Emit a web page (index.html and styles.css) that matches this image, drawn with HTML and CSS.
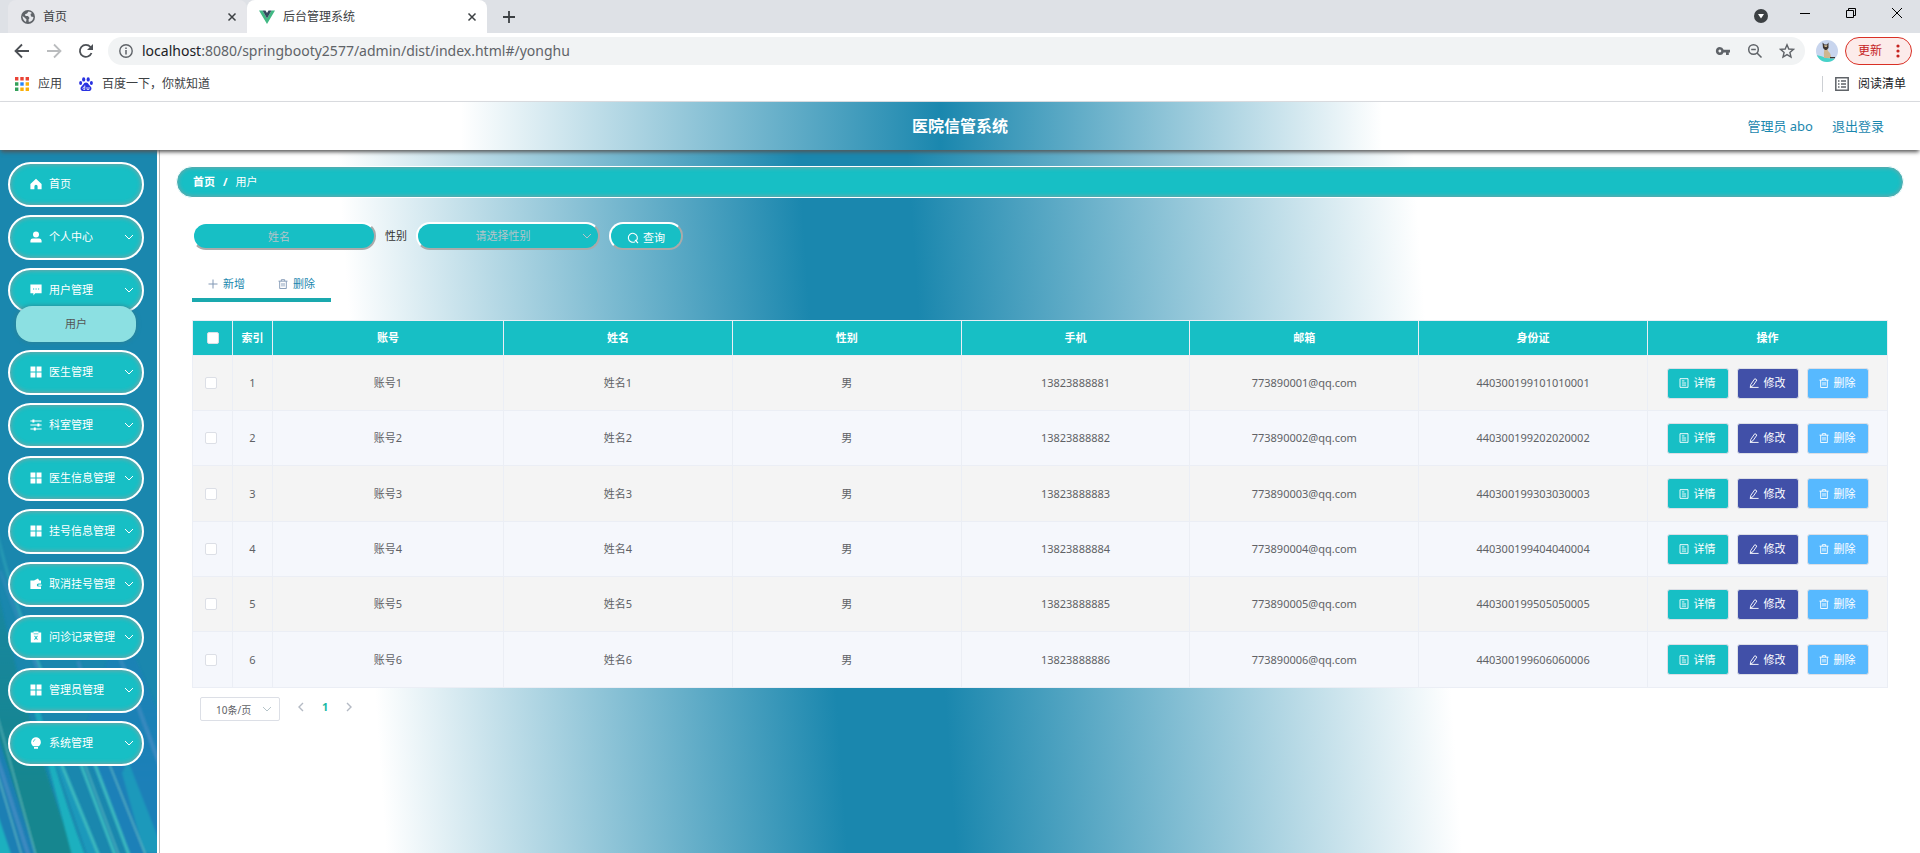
FILE: index.html
```html
<!DOCTYPE html>
<html lang="zh-CN">
<head>
<meta charset="utf-8">
<title>后台管理系统</title>
<link rel="stylesheet" href="styles.css">
</head>
<body>
<svg class="defs" aria-hidden="true">
  <symbol id="home" viewBox="0 0 12 12"><path fill="currentColor" d="M6 .8 11.6 6v5.2H7.6V8.4a1.6 1.6 0 0 0-3.2 0v2.8H.4V6z"/></symbol>
  <symbol id="user" viewBox="0 0 12 12"><circle cx="6" cy="3.4" r="3" fill="currentColor"/><path fill="currentColor" d="M.4 11.4V9.8Q.6 7.6 2.8 7.6h6.4q2.2 0 2.4 2.2v1.6z"/></symbol>
  <symbol id="chat" viewBox="0 0 12 12"><path fill="currentColor" fill-rule="evenodd" d="M.4.6h11.2v8.6H5.2L3.4 11.4V9.2h-3zM3 4.4v1.2h1.2V4.4zm2.5 0v1.2h1.2V4.4zm2.5 0v1.2h1.2V4.4z"/></symbol>
  <symbol id="grid" viewBox="0 0 12 12"><path fill="currentColor" d="M.5.5h4.900v4.900H.5zm6.100 0h4.900v4.900H6.600zM.5 6.600h4.900v4.900H.5zm6.100 0h4.900v4.900H6.600z"/></symbol>
  <symbol id="sliders" viewBox="0 0 12 12"><path stroke="currentColor" stroke-width="1" d="M.4 2h11.200M.4 6h11.200M.4 10h11.200"/><path fill="currentColor" d="M2.400.6h2v2.800h-2zM7.400 4.600h2v2.800h-2zM3.800 8.600h2v2.800h-2z"/></symbol>
  <symbol id="wallet" viewBox="0 0 12 12"><path fill="currentColor" fill-rule="evenodd" d="M4 2.600 8 .4l1.200 2.200h1.800v2.800H8.400a1.600 1.600 0 0 0 0 3.200H11V11H.4V2.600zM8.400 6.400h3.200v1.400H8.400z"/></symbol>
  <symbol id="clip" viewBox="0 0 12 12"><path fill="currentColor" fill-rule="evenodd" d="M.8 1.400h2.800V.4h4.800v1h2.800v10.200H.8zM3.600 2.400v.8h4.800v-.8zM4.200 5.200 5.400 6.700 4.200 8.300l.7.600L6 7.500l1.100 1.400.7-.6-1.200-1.600 1.200-1.500-.7-.6L6 6 4.900 4.600z"/></symbol>
  <symbol id="bulb" viewBox="0 0 12 12"><path fill="currentColor" d="M6 .2a4.900 4.900 0 0 1 2.600 9H3.400A4.900 4.900 0 0 1 6 .2zM4 10h4v1.800H4z"/><path d="M3.400 4.800Q3.600 2.800 5.400 2.400" fill="none" stroke="#17bfc5" stroke-width=".7"/></symbol>
  <symbol id="down" viewBox="0 0 10 10"><path d="m1 3 4 4 4-4" fill="none" stroke="currentColor" stroke-width="1"/></symbol>
  <symbol id="left" viewBox="0 0 10 10"><path d="M7 1 3 5l4 4" fill="none" stroke="currentColor" stroke-width="1.400"/></symbol>
  <symbol id="right" viewBox="0 0 10 10"><path d="m3 1 4 4-4 4" fill="none" stroke="currentColor" stroke-width="1.400"/></symbol>
  <symbol id="search" viewBox="0 0 12 12"><path d="M8 9.700A4.500 4.500 0 1 1 9.400 8.500M8 8l3 3" fill="none" stroke="currentColor" stroke-width="1.100"/></symbol>
  <symbol id="plus" viewBox="0 0 10 10"><path d="M5 .5v9M.5 5h9" stroke="currentColor" stroke-width="1"/></symbol>
  <symbol id="trash" viewBox="0 0 12 12"><path d="M.6 2.600h10.800M4 2.600V.8h4v1.800M2 2.600v8.800h8V2.600M4.800 4.800v4.200M7.200 4.800v4.200" fill="none" stroke="currentColor" stroke-width="1.100"/></symbol>
  <symbol id="doc" viewBox="0 0 12 12"><path d="M1.200.8h9.600v10.400H1.200zM3.500 3.500h3M3.500 6h5M3.500 8.500h5" fill="none" stroke="currentColor" stroke-width="1.100"/></symbol>
  <symbol id="pen" viewBox="0 0 12 12"><path d="M7 .8 9.500 2.400 4.800 9.200 1.600 10.800 2.200 7.600zM1 11.300h10.500" fill="none" stroke="currentColor" stroke-width="1.100"/></symbol>
  <symbol id="x" viewBox="0 0 10 10"><path d="m1.500 1.500 7 7m0-7-7 7" stroke="currentColor" stroke-width="1.500"/></symbol>
</svg>

<div class="browser">
  <div class="tabs">
    <div class="tab">
      <svg class="i14" viewBox="0 0 14 14"><circle cx="7" cy="7" r="7" fill="#5f6368"/><path fill="#e6e7eb" d="M7.500 1.500 6 3.500l-2 .8.5 1.700H7l1.500 2-1 1.500L7.800 12Q12 11.400 12.500 7L10 6.500 9.500 4 11 3Q9.500 1.500 7.500 1.500zM1.500 6Q1.600 10 5 12L5.500 9.500 3.500 7.500z"/></svg>
      <span class="tab-title">首页</span>
      <button class="plain" aria-label="关闭"><svg class="i10"><use href="#x"/></svg></button>
    </div>
    <div class="tab active">
      <svg class="i16" viewBox="0 0 16 16"><path fill="#41b883" d="M0 1.500h3.500L8 9.500l4.500-8H16L8 15z"/><path fill="#35495e" d="M3.500 1.500h3L8 4l1.500-2.500h3L8 9.500z"/></svg>
      <span class="tab-title">后台管理系统</span>
      <button class="plain" aria-label="关闭"><svg class="i10"><use href="#x"/></svg></button>
    </div>
    <button class="plain new-tab" aria-label="新标签页"><svg class="i12" viewBox="0 0 12 12"><path d="M6 0v12M0 6h12" stroke="#3c4043" stroke-width="1.800"/></svg></button>
    <div class="window-btns">
      <button class="plain search-tabs" aria-label="搜索标签页"><svg class="i14" viewBox="0 0 14 14"><circle cx="7" cy="7" r="7" fill="#3c4043"/><path d="M4 5h6L7 9.500z" fill="#fff"/></svg></button>
      <button class="plain" aria-label="最小化"><svg class="i12" viewBox="0 0 12 12"><path d="M1 6.500h10" stroke="#000"/></svg></button>
      <button class="plain" aria-label="还原"><svg class="i12" viewBox="0 0 12 12"><path d="M1.500 3.500h7v7h-7zM3.500 3.500v-2h7v7h-2" fill="none" stroke="#000"/></svg></button>
      <button class="plain" aria-label="关闭窗口"><svg class="i12" viewBox="0 0 12 12"><path d="m1 1 10 10M11 1 1 11" stroke="#000"/></svg></button>
    </div>
  </div>
  <div class="toolbar">
    <div class="nav-btns">
      <button class="plain" aria-label="后退"><svg class="i16" viewBox="0 0 16 16"><path d="M15 8H2M8 1.500 1.500 8 8 14.500" fill="none" stroke="#4c5055" stroke-width="1.800"/></svg></button>
      <button class="plain" aria-label="前进"><svg class="i16" viewBox="0 0 16 16"><path d="M1 8h13M8 1.500 14.500 8 8 14.500" fill="none" stroke="#babcbe" stroke-width="1.800"/></svg></button>
      <button class="plain" aria-label="刷新"><svg class="i16" viewBox="0 0 16 16"><path d="M13.500 10A6 6 0 1 1 12.500 4L14 6" fill="none" stroke="#4c5055" stroke-width="1.800"/><path d="M15 1v6H9z" fill="#4c5055"/></svg></button>
    </div>
    <div class="omnibox">
      <svg class="i14" viewBox="0 0 14 14"><circle cx="7" cy="7" r="6.200" fill="none" stroke="#5f6368" stroke-width="1.400"/><path d="M7 6v4.500M7 3.400v1.500" stroke="#5f6368" stroke-width="1.500"/></svg>
      <span class="url"><b>localhost</b>:8080/springbooty2577/admin/dist/index.html#/yonghu</span>
      <div class="omni-icons">
        <svg class="i16" viewBox="0 0 16 16"><path fill="#5f6368" fill-rule="evenodd" d="M4.800 4a4 4 0 0 1 3.800 2.700H15v2.800h-1.200V12H11V9.500H8.600A4 4 0 1 1 4.800 4zm0 2.600a1.400 1.400 0 1 0 .1 0z"/></svg>
        <svg class="i16" viewBox="0 0 16 16"><circle cx="6.500" cy="6.500" r="4.800" fill="none" stroke="#5f6368" stroke-width="1.500"/><path d="M10 10l4.500 4.500M4.200 6.500h4.600" stroke="#5f6368" stroke-width="1.500"/></svg>
        <svg class="i16" viewBox="0 0 16 16"><path d="m8 1.800 1.800 4.200 4.700.4-3.600 3 1.100 4.600L8 11.600 4 14l1.100-4.600-3.600-3 4.700-.4z" fill="none" stroke="#5f6368" stroke-width="1.400"/></svg>
      </div>
    </div>
    <svg class="avatar" viewBox="0 0 22 22"><defs><clipPath id="round"><circle cx="11" cy="11" r="11"/></clipPath></defs><g clip-path="url(#round)"><path fill="#c8d5ee" d="M0 0h22v22H0z"/><path fill="#45d3c8" d="M0 15q6 1 10 3l12 1v3H0z"/><path fill="#cdb68f" d="M8.500 8h3l.5 3q3 2 3 7H8q-.5-5 .5-10z"/><path fill="#3d3530" d="m6.500 2.500 2 2h2.500l1.500-2V8l-2 2H9L7 8zM14 17h5v1.200h-5z"/><path fill="#cdb68f" d="M8 5.200h3.500L10.700 7H8.800z"/></g></svg>
    <button class="update">更新<svg class="dots" viewBox="0 0 4 14"><g fill="#c5221f"><circle cx="2" cy="2" r="1.600"/><circle cx="2" cy="7" r="1.600"/><circle cx="2" cy="12" r="1.600"/></g></svg></button>
  </div>
  <div class="bookmarks">
    <a class="bookmark" href="#apps"><svg class="i14" viewBox="0 0 14 14"><path fill="#ea4335" d="M0 0h3.400v3.400H0zM5.300 0h3.400v3.400H5.300zM10.600 0H14v3.400h-3.400z"/><path fill="#34a05a" d="M0 5.300h3.400v3.400H0zM0 10.600h3.400V14H0z"/><path fill="#2684fc" d="M5.300 5.300h3.400v3.400H5.300z"/><path fill="#fbaf08" d="M10.600 5.300H14v3.400h-3.400zM5.300 10.600h3.400V14H5.300zM10.600 10.600H14V14h-3.400z"/></svg>应用</a>
    <a class="bookmark" href="#baidu"><svg class="i14" viewBox="0 0 14 14"><g fill="#2932e1"><ellipse cx="4.700" cy="2.400" rx="1.600" ry="2.200"/><ellipse cx="9.200" cy="2.400" rx="1.600" ry="2.200"/><ellipse cx="1.600" cy="6" rx="1.500" ry="2"/><ellipse cx="12.400" cy="6" rx="1.500" ry="2"/><path d="M7 5.600q1.800 0 3 2.200l2.200 2.400q1 2.800-1.700 3.700H3.500Q.8 13 1.800 10.200L4 7.800Q5.200 5.600 7 5.600z"/></g><path d="M5.800 8.500v4H4.600q-1.400-1.200 0-2.400h1.200M8 10v2.400h2V10" fill="none" stroke="#fff" stroke-width=".8"/></svg>百度一下，你就知道</a>
    <a class="bookmark reading" href="#reading"><svg class="i14" viewBox="0 0 14 14"><path d="M.8.8h12.400v12.400H.8zM3 4h1.500M3 7h1.500M3 10h1.500M6 4h5M6 7h5M6 10h5" fill="none" stroke="#5f6368" stroke-width="1.500"/></svg>阅读清单</a>
  </div>
</div>

<header class="header">
  <h1>医院信管系统</h1>
  <div class="account"><a href="#me">管理员 abo</a><a href="#logout">退出登录</a></div>
</header>

<div class="app">
  <nav class="sidebar">
    <svg class="streaks" viewBox="0 0 157 702" preserveAspectRatio="none" aria-hidden="true">
      <defs>
        <linearGradient id="fade" x1="0" y1="0" x2="0" y2="1"><stop offset=".42" stop-color="#fff" stop-opacity="0"/><stop offset=".7" stop-color="#fff" stop-opacity=".6"/><stop offset=".9" stop-color="#fff"/></linearGradient>
        <mask id="m"><path fill="url(#fade)" d="M0 0h157v702H0z"/></mask>
        <filter id="soft"><feGaussianBlur stdDeviation="1.200"/></filter>
      </defs>
      <g mask="url(#m)"><g filter="url(#soft)">
        <path fill="#12868f" d="M-10 400Q20 560 78 712H38L-10 570z"/>
        <path fill="#1a7fb4" d="M-10 560 38 712H10L-10 650z"/>
        <path fill="#1b80b8" d="M82 590Q110 660 134 712h40V600L120 470z"/>
        <path fill="#1fb0bf" d="M40 560Q60 640 88 712H74L34 560zM-10 640 14 712H-10z"/>
        <path fill="#1d99bb" d="M52 590 100 712H90L48 590zM128 610l36 92h-20l-22-80z"/>
        <path fill="none" stroke="#3cbcc0" stroke-width="3" d="m52 590 50 122M72 590l46 122M86 590l46 122M-10 350Q10 450 50 540"/>
        <path fill="none" stroke="#6cc7c6" stroke-width="1" d="M-4 560 38 712M80 600l42 112M96 580l52 130M-4 618 24 712"/>
        <path fill="none" stroke="#4c8fc6" stroke-width="4" opacity=".7" d="m78 510 12 40M110 480l52 140M-5 600l36 112M0 420l50 130"/>
      </g></g>
    </svg>
    <a class="item" href="#home"><svg class="i12"><use href="#home"/></svg><span>首页</span></a>
    <button class="item"><svg class="i12"><use href="#user"/></svg><span>个人中心</span><svg class="i10"><use href="#down"/></svg></button>
    <button class="item"><svg class="i12"><use href="#chat"/></svg><span>用户管理</span><svg class="i10"><use href="#down"/></svg></button>
    <a class="sub" href="#yonghu">用户</a>
    <button class="item"><svg class="i12"><use href="#grid"/></svg><span>医生管理</span><svg class="i10"><use href="#down"/></svg></button>
    <button class="item"><svg class="i12"><use href="#sliders"/></svg><span>科室管理</span><svg class="i10"><use href="#down"/></svg></button>
    <button class="item"><svg class="i12"><use href="#grid"/></svg><span>医生信息管理</span><svg class="i10"><use href="#down"/></svg></button>
    <button class="item"><svg class="i12"><use href="#grid"/></svg><span>挂号信息管理</span><svg class="i10"><use href="#down"/></svg></button>
    <button class="item"><svg class="i12"><use href="#wallet"/></svg><span>取消挂号管理</span><svg class="i10"><use href="#down"/></svg></button>
    <button class="item"><svg class="i12"><use href="#clip"/></svg><span>问诊记录管理</span><svg class="i10"><use href="#down"/></svg></button>
    <button class="item"><svg class="i12"><use href="#grid"/></svg><span>管理员管理</span><svg class="i10"><use href="#down"/></svg></button>
    <button class="item"><svg class="i12"><use href="#bulb"/></svg><span>系统管理</span><svg class="i10"><use href="#down"/></svg></button>
  </nav>

  <main class="main">
    <div class="crumbs"><a href="#home">首页</a><b>/</b><span>用户</span></div>
    <div class="content">
      <form class="filters">
        <input class="field" type="text" placeholder="姓名" aria-label="姓名">
        <label for="sex">性别</label>
        <div class="select-wrap"><select class="field" id="sex"><option>请选择性别</option><option>男</option><option>女</option></select><svg class="i10"><use href="#down"/></svg></div>
        <button class="query" type="button"><svg class="i12"><use href="#search"/></svg>查询</button>
      </form>
      <div class="actions">
        <button class="plain"><svg class="i10"><use href="#plus"/></svg>新增</button>
        <button class="plain"><svg class="i10"><use href="#trash"/></svg>删除</button>
      </div>
      <table class="table">
        <colgroup><col class="narrow"><col class="narrow"><col class="account-col"><col><col><col><col><col><col class="ops-col"></colgroup>
        <thead><tr><th><input type="checkbox" aria-label="全选"></th><th>索引</th><th>账号</th><th>姓名</th><th>性别</th><th>手机</th><th>邮箱</th><th>身份证</th><th>操作</th></tr></thead>
        <tbody id="rows"></tbody>
      </table>
      <div class="pager">
        <div class="select-wrap"><select aria-label="每页条数"><option>10条/页</option><option>20条/页</option></select><svg class="i10"><use href="#down"/></svg></div>
        <button class="plain" aria-label="上一页"><svg class="i10"><use href="#left"/></svg></button>
        <button class="plain current">1</button>
        <button class="plain" aria-label="下一页"><svg class="i10"><use href="#right"/></svg></button>
      </div>
    </div>
  </main>
</div>
<script src="app.js"></script>
</body>
</html>
```
FILE: app.js
```js
const ids = ["440300199101010001", "440300199202020002", "440300199303030003", "440300199404040004", "440300199505050005", "440300199606060006"];
const op = (kind, icon, text) => `<button class="op ${kind}"><svg class="i10"><use href="#${icon}"/></svg>${text}</button>`;
document.getElementById("rows").innerHTML = ids.map((id, i) => {
  const n = i + 1;
  return `<tr><td><input type="checkbox" aria-label="选择第${n}行"></td><td>${n}</td><td>账号${n}</td><td>姓名${n}</td><td>男</td><td>1382388888${n}</td><td>77389000${n}@qq.com</td><td>${id}</td><td><div class="ops">${op("detail", "doc", "详情")}${op("edit", "pen", "修改")}${op("remove", "trash", "删除")}</div></td></tr>`;
}).join("");
```
FILE: styles.css
```css
* { box-sizing: border-box; }
body {
  margin: 0;
  min-height: 100vh;
  display: flex;
  flex-direction: column;
  font: 11px/16px "Noto Sans", "Noto Sans CJK SC", sans-serif;
  color: #606266;
  background: #fff;
}
a { color: inherit; text-decoration: none; }
button, input, select { font: inherit; color: inherit; margin: 0; }
button { cursor: pointer; }
svg { display: block; flex: none; }
.defs { position: absolute; width: 0; height: 0; }
.i10 { width: 10px; height: 10px; }
.i12 { width: 12px; height: 12px; }
.i14 { width: 14px; height: 14px; }
.i16 { width: 16px; height: 16px; }
.plain { display: flex; align-items: center; border: 0; padding: 0; background: none; }

/* browser window */
.browser { font-size: 12px; color: #3c4043; border-bottom: 1px solid #dadce0; }
.tabs { display: flex; height: 33px; padding-left: 8px; background: #dee1e6; }
.tab {
  display: flex;
  align-items: center;
  gap: 8px;
  width: 239px;
  padding: 0 10px 0 13px;
  border-radius: 8px 8px 0 0;
  background: #e6e7eb;
}
.tab.active { width: 240px; padding-left: 12px; background: #fff; }
.tab-title { flex: 1; }
.new-tab { margin-left: 16px; }
.window-btns { display: flex; gap: 34px; margin-left: auto; padding: 0 17px 7px 0; }
.search-tabs { padding-top: 5px; margin-right: -3px; }
.toolbar { display: flex; align-items: center; height: 36px; padding: 0 8px 0 14px; }
.nav-btns { display: flex; gap: 16px; margin-right: 14px; }
.omnibox {
  flex: 1;
  display: flex;
  align-items: center;
  gap: 9px;
  height: 28px;
  padding: 0 10px 0 11px;
  border-radius: 14px;
  background: #f1f3f4;
}
.url { flex: 1; font-size: 14px; color: #5f6368; }
.url b { font-weight: 400; color: #202124; }
.omni-icons { display: flex; gap: 16px; }
.avatar { width: 22px; height: 22px; margin: 0 7px 0 11px; }
.update {
  display: flex;
  align-items: center;
  gap: 14px;
  height: 28px;
  padding: 0 11px 0 12px;
  border: 1px solid #d93025;
  border-radius: 14px;
  background: #fcebea;
  color: #c5221f;
}
.dots { width: 4px; height: 14px; }
.bookmarks { display: flex; align-items: center; gap: 17px; height: 32px; padding: 0 14px 3px 15px; }
.bookmark { display: flex; align-items: center; gap: 9px; }
.reading { margin-left: auto; padding-left: 12px; border-left: 1px solid #cdd0d4; color: #202124; }

/* page header */
.header {
  position: relative;
  z-index: 1;
  display: grid;
  grid-template-columns: 1fr auto 1fr;
  align-items: center;
  height: 48px;
  padding: 0 36px;
  background: linear-gradient(90deg, #fff 24%, #1a87ae 49%, #fff 72%);
  box-shadow: 0 3px 4px -1px #555;
}
.header h1 { grid-column: 2; margin: 0; font-size: 16px; line-height: 24px; color: #fff; }
.account { display: flex; justify-content: flex-end; gap: 19px; font-size: 13px; color: #1a87ae; }

.app { flex: 1; display: flex; }

/* side menu */
.sidebar {
  position: relative;
  display: flex;
  flex-direction: column;
  gap: 8px;
  width: 157px;
  padding: 12px 13px 12px 8px;
  background: #1a87ae;
  color: #fff;
}
.streaks { position: absolute; inset: 0; width: 100%; height: 100%; }
.item {
  position: relative;
  display: flex;
  align-items: center;
  gap: 7px;
  height: 45px;
  padding: 0 8px 1px 20px;
  border: 2px solid #fff;
  border-radius: 23px;
  background: #17bfc5;
  box-shadow: inset 0 0 5px #999;
  color: #fff;
  text-align: left;
}
.item span { flex: 1; white-space: nowrap; }
.sub {
  position: relative;
  display: flex;
  align-items: center;
  justify-content: center;
  height: 36px;
  margin: -15px 8px 0;
  border-radius: 16px;
  background: #8ce0e2;
  box-shadow: 0 0 5px #31818f;
  color: #555;
}

/* content */
.main {
  flex: 1;
  min-width: 0;
  margin-left: 2px;
  padding: 16px;
  border-left: 1px solid #bbb;
  background: linear-gradient(86deg, #fff 12.5%, #1a87ae 38%, #1a87ae 44%, #fff 72%);
}
.crumbs {
  display: flex;
  align-items: center;
  gap: 8px;
  height: 32px;
  padding: 0 16px;
  border: 1px solid #fff;
  border-radius: 16px;
  background: #17bfc5;
  box-shadow: inset 0 0 5px #999;
  color: #fff;
}
.crumbs a { font-weight: 700; }
.content { padding: 24px 16px 0; }
.filters { display: flex; align-items: center; gap: 9px; color: #333; }
.field, .query {
  height: 28px;
  border: 2px solid;
  border-color: #fff #aaa #aaa #fff;
  border-radius: 14px;
  background: #17bfc5;
}
.field { width: 184px; padding: 0 18px 0 8px; text-align: center; text-align-last: center; color: #b5c4c9; }
.field::placeholder { color: #b5c4c9; }
select { appearance: none; }
.select-wrap { position: relative; display: flex; }
.select-wrap svg { position: absolute; right: 8px; top: 0; bottom: 0; margin: auto; color: #b5c4c9; pointer-events: none; }
.query { display: flex; align-items: center; gap: 4px; padding: 3px 16px 0; color: #fff; }
.actions {
  display: flex;
  gap: 33px;
  width: max-content;
  height: 38px;
  margin: 14px 0 18px;
  padding: 6px 16px 0;
  border-bottom: 4px solid #1aa9ae;
  color: #1a87ae;
}
.actions .plain { gap: 5px; }
.actions svg { color: #8298b5; }

.table { width: 100%; table-layout: fixed; border-collapse: collapse; text-align: center; }
.narrow { width: 40px; }
.account-col { width: 231px; }
.ops-col { width: 240px; }
.table th, .table td { padding: 0; border: 1px solid #ebeef5; }
.table th { height: 35px; background: #17bfc5; color: #fff; font-weight: 700; }
.table td { height: 55px; background: #f5f7fa; }
.table tr:nth-child(odd) td { background: #f4f4f4; }
.table tr:nth-child(even) td { background: #f5f7fc; }
.table tr:nth-child(3n) td { height: 56px; }
.table input {
  appearance: none;
  display: block;
  width: 12px;
  height: 12px;
  margin: 0 auto 0 12px;
  border: 1px solid #dcdfe6;
  border-radius: 2px;
  background: #fff;
}
.table th input { margin: 0 auto; }
.ops { display: flex; justify-content: center; gap: 8px; }
.op {
  display: flex;
  align-items: center;
  gap: 5px;
  height: 31px;
  padding: 0 12px 0 11px;
  border: 1px solid #dcdfe6;
  border-radius: 3px;
  color: #fff;
}
.detail { background: #17bfc5; }
.edit { background: #4150a8; }
.remove { background: #57b9ff; }

.pager { display: flex; gap: 16px; padding: 9px 8px; color: #b4bac4; }
.pager select {
  width: 80px;
  height: 24px;
  padding: 2px 15px 0;
  border: 1px solid #dcdfe6;
  border-radius: 2px;
  background: #fff;
  color: #606266;
  font-size: 10px;
}
.pager .plain { height: 19px; }
.pager .current { color: #18b9a5; font-weight: 700; }
```
